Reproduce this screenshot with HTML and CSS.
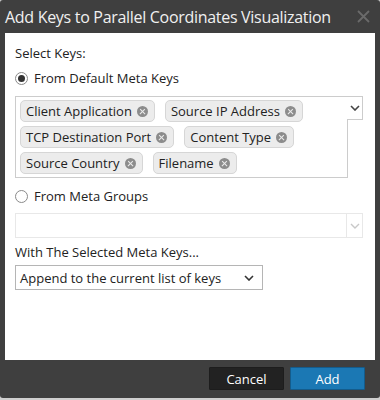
FILE: index.html
```html
<!DOCTYPE html>
<html>

<head>
    <title>Add Keys to Parallel Coordinates Visualization</title>
    <link rel="stylesheet" href="styles.css">
</head>

<body>
    <div class="dialog">
        <div class="dialog-title">
            <span>Add Keys to Parallel Coordinates Visualization</span>
            <svg class="close" width="13" height="13" viewBox="0 0 13 13">
                <path d="M1 1 L12 12 M12 1 L1 12" stroke="#6a6a6a" stroke-width="1.8" />
            </svg>
        </div>

        <div class="dialog-body">
            <div class="label">Select Keys:</div>

            <label class="radio-row">
                <span class="radio checked"></span>
                From Default Meta Keys
            </label>

            <div class="tag-select">
                <div class="tags">
                    <span class="tag">Client Application <i class="tag-x"></i></span>
                    <span class="tag">Source IP Address <i class="tag-x"></i></span>
                    <span class="tag">TCP Destination Port <i class="tag-x"></i></span>
                    <span class="tag">Content Type <i class="tag-x"></i></span>
                    <span class="tag">Source Country <i class="tag-x"></i></span>
                    <span class="tag">Filename <i class="tag-x"></i></span>
                </div>
                <div class="tag-side">
                    <div class="tag-arrow">
                        <svg width="10" height="6" viewBox="0 0 10 6">
                            <path d="M1 1 L5 5 L9 1" fill="none" stroke="#444" stroke-width="1.6" />
                        </svg>
                    </div>
                    <div class="tag-side-rest"></div>
                </div>
            </div>

            <label class="radio-row second">
                <span class="radio"></span>
                From Meta Groups
            </label>

            <div class="group-select">
                <div class="group-value"></div>
                <div class="group-arrow">
                    <svg width="10" height="6" viewBox="0 0 10 6">
                        <path d="M1 1 L5 5 L9 1" fill="none" stroke="#c8c8c8" stroke-width="1.4" />
                    </svg>
                </div>
            </div>

            <div class="label with-label">With The Selected Meta Keys...</div>

            <div class="action-select">
                <span>Append to the current list of keys</span>
                <svg width="10" height="6" viewBox="0 0 10 6">
                    <path d="M1 1 L5 5 L9 1" fill="none" stroke="#333" stroke-width="1.6" />
                </svg>
            </div>
        </div>

        <div class="dialog-footer">
            <button class="btn btn-cancel">Cancel</button>
            <button class="btn btn-add">Add</button>
        </div>
    </div>
</body>

</html>
```

FILE: styles.css
```css
body {
    margin: 0;
    padding: 0;
    background: #cfcfcf;
    font-family: "Open Sans", Arial, sans-serif;
    font-size: 13px;
    color: #222;
}

.dialog {
    width: 380px;
    height: 398px;
    background-color: #3f3f3f;
    border-radius: 3px;
    display: flex;
    flex-direction: column;
    box-sizing: border-box;
    padding: 0 5px;
}

.dialog-title {
    height: 33px;
    display: flex;
    align-items: center;
    justify-content: space-between;
    color: #f0f0f0;
    font-size: 16px;
    letter-spacing: -0.3px;
    white-space: nowrap;
    padding-right: 5px;
}

.dialog-body {
    background-color: white;
    height: 327px;
    padding: 10px 10px 0 10px;
    box-sizing: border-box;
}

.label {
    line-height: 18px;
    margin-top: 1px;
}

.radio-row {
    display: flex;
    align-items: center;
    gap: 6px;
    line-height: 18px;
    margin-top: 7px;
}

.radio-row.second {
    margin-top: 9px;
}

.radio {
    width: 11px;
    height: 11px;
    border: 1px solid #8a8a8a;
    border-radius: 50%;
    display: flex;
    align-items: center;
    justify-content: center;
    background: white;
}

.radio.checked::after {
    content: "";
    width: 7px;
    height: 7px;
    border-radius: 50%;
    background: #333;
}

.tag-select {
    display: flex;
    margin-top: 9px;
    width: 348px;
}

.tags {
    flex: 1;
    border: 1px solid #ccc;
    border-right: none;
    display: flex;
    flex-wrap: wrap;
    gap: 4px 10px;
    padding: 3px 4px 2px 4px;
    height: 82px;
    box-sizing: border-box;
    align-content: flex-start;
}

.tag {
    height: 22px;
    box-sizing: border-box;
    border: 1px solid #d6d6d6;
    border-radius: 5px;
    background: #ececec;
    display: inline-flex;
    align-items: center;
    gap: 5px;
    padding: 0 6px 0 5px;
    color: #222;
}

.tag-x {
    width: 11px;
    height: 11px;
    border-radius: 50%;
    background: #8c8c8c;
    position: relative;
}

.tag-x::before,
.tag-x::after {
    content: "";
    position: absolute;
    left: 2px;
    top: 5px;
    width: 7px;
    height: 1.4px;
    background: #ececec;
    transform: rotate(45deg);
}

.tag-x::after {
    transform: rotate(-45deg);
}

.tag-side {
    width: 16px;
    display: flex;
    flex-direction: column;
}

.tag-arrow {
    height: 24px;
    box-sizing: border-box;
    border: 1px solid #ccc;
    border-left: none;
    display: flex;
    align-items: center;
    justify-content: center;
}

.tag-side-rest {
    flex: 1;
    border-left: 1px solid #ccc;
    margin-top: -1px;
}

.group-select {
    display: flex;
    width: 348px;
    height: 25px;
    box-sizing: border-box;
    border: 1px solid #e8e8e8;
    margin-top: 8px;
}

.group-value {
    flex: 1;
}

.group-arrow {
    width: 15px;
    border-left: 1px solid #e8e8e8;
    display: flex;
    align-items: center;
    justify-content: center;
}

.with-label {
    margin-top: 5px;
}

.action-select {
    width: 248px;
    height: 25px;
    box-sizing: border-box;
    border: 1px solid #b5b5b5;
    margin-top: 4px;
    display: flex;
    align-items: center;
    justify-content: space-between;
    padding: 0 8px 0 4px;
}

.dialog-footer {
    flex: 1;
    display: flex;
    justify-content: flex-end;
    align-items: flex-start;
    gap: 6px;
    padding-top: 7px;
    padding-right: 10px;
}

.btn {
    width: 75px;
    height: 23px;
    border: 1px solid #1d1d1d;
    border-radius: 1px;
    color: white;
    font-family: "Open Sans", Arial, sans-serif;
    font-size: 13px;
    cursor: pointer;
}

.btn-cancel {
    background-color: #222;
}

.btn-add {
    background-color: #1b78b4;
    border-color: #145c8c;
}
```
